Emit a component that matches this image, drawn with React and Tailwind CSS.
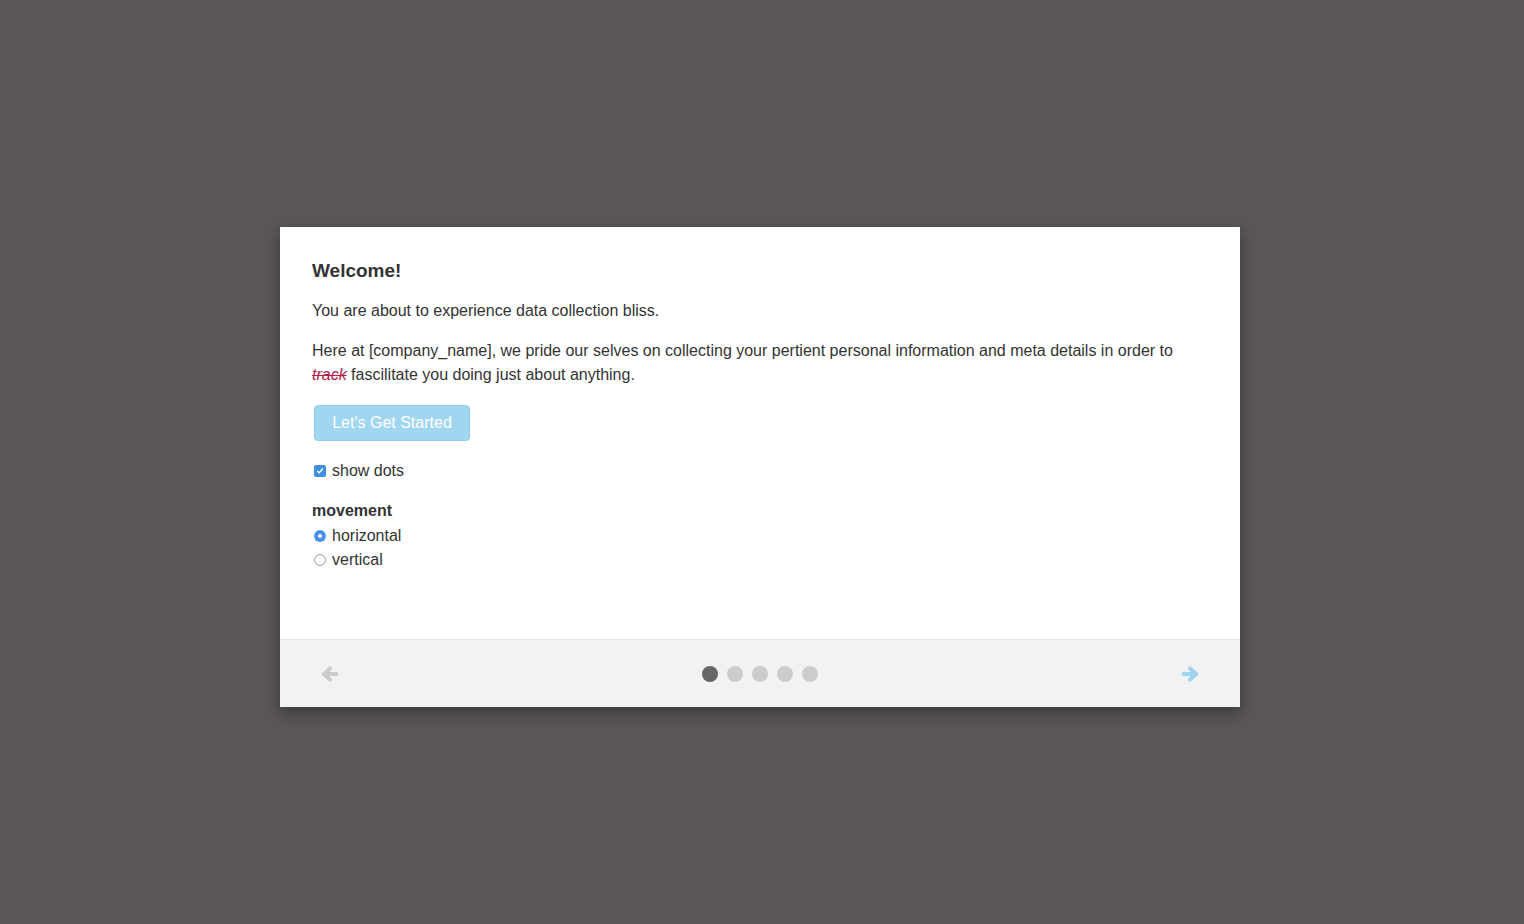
import React from 'react';

function Arrow({ dir = 'right', color }) {
    return (
        <svg width="18" height="16" viewBox="0 0 18 16" className={dir === 'left' ? 'rotate-180' : ''}>
            <g fill="none" stroke={color} strokeWidth="4" strokeLinecap="round" strokeLinejoin="round">
                <line x1="2.5" y1="8" x2="15" y2="8" />
                <polyline points="9,2.4 15,8 9,13.6" />
            </g>
        </svg>
    );
}

export default function App() {
    const dots = [0, 1, 2, 3, 4];
    return (
        <div className="min-h-[924px] bg-[#5a5658] pl-[280px] pt-[227px] font-['Liberation_Sans',Arial,sans-serif] text-[#333]">
            <div className="w-[960px] h-[480px] bg-white flex flex-col shadow-[0_6px_14px_rgba(0,0,0,0.35)]">
                <div className="flex-1 px-8 pt-[30px] text-base leading-6">
                    <h3 className="text-[19px] leading-7 font-bold mb-[14px]">Welcome!</h3>
                    <p className="mb-4">You are about to experience data collection bliss.</p>
                    <p className="mb-[18px]">
                        Here at [company_name], we pride our selves on collecting your pertient personal information and meta details in order to
                        <br />
                        <span className="italic line-through text-[#b3214a]">track</span> fascilitate you doing just about anything.
                    </p>
                    <button className="ml-[2px] w-[156px] h-[36px] rounded-[4px] bg-[#a1d6f0] border border-[#93cbe6] text-white text-base">
                        Let's Get Started
                    </button>
                    <label className="flex items-center mt-[18px]">
                        <span className="ml-[2px] mr-[6px] w-[12px] h-[12px] rounded-[2px] bg-[#3f8ee0] flex items-center justify-center">
                            <svg width="8" height="8" viewBox="0 0 8 8">
                                <polyline points="1.5,4.2 3.2,5.8 6.5,2" fill="none" stroke="white" strokeWidth="1.4" strokeLinecap="round" />
                            </svg>
                        </span>
                        show dots
                    </label>
                    <div className="mt-[16px] font-bold">movement</div>
                    <label className="flex items-center mt-px">
                        <span className="ml-[2px] mr-[6px] w-[12px] h-[12px] rounded-full bg-[#4a90e2] flex items-center justify-center">
                            <span className="w-[4px] h-[4px] rounded-full bg-white" />
                        </span>
                        horizontal
                    </label>
                    <label className="flex items-center">
                        <span className="ml-[2px] mr-[6px] w-[12px] h-[12px] rounded-full border border-[#9a9a9a] bg-white" />
                        vertical
                    </label>
                </div>
                <div className="h-[68px] bg-[#f2f2f2] border-t border-[#e3e3e3] flex items-center justify-between px-[41px]">
                    <Arrow dir="left" color="#cccccc" />
                    <div className="flex gap-[9px] -ml-px">
                        {dots.map(i => (
                            <span key={i} className={`w-4 h-4 rounded-full ${i === 0 ? 'bg-[#666]' : 'bg-[#ccc]'}`} />
                        ))}
                    </div>
                    <Arrow dir="right" color="#9fd3ee" />
                </div>
            </div>
        </div>
    );
}
